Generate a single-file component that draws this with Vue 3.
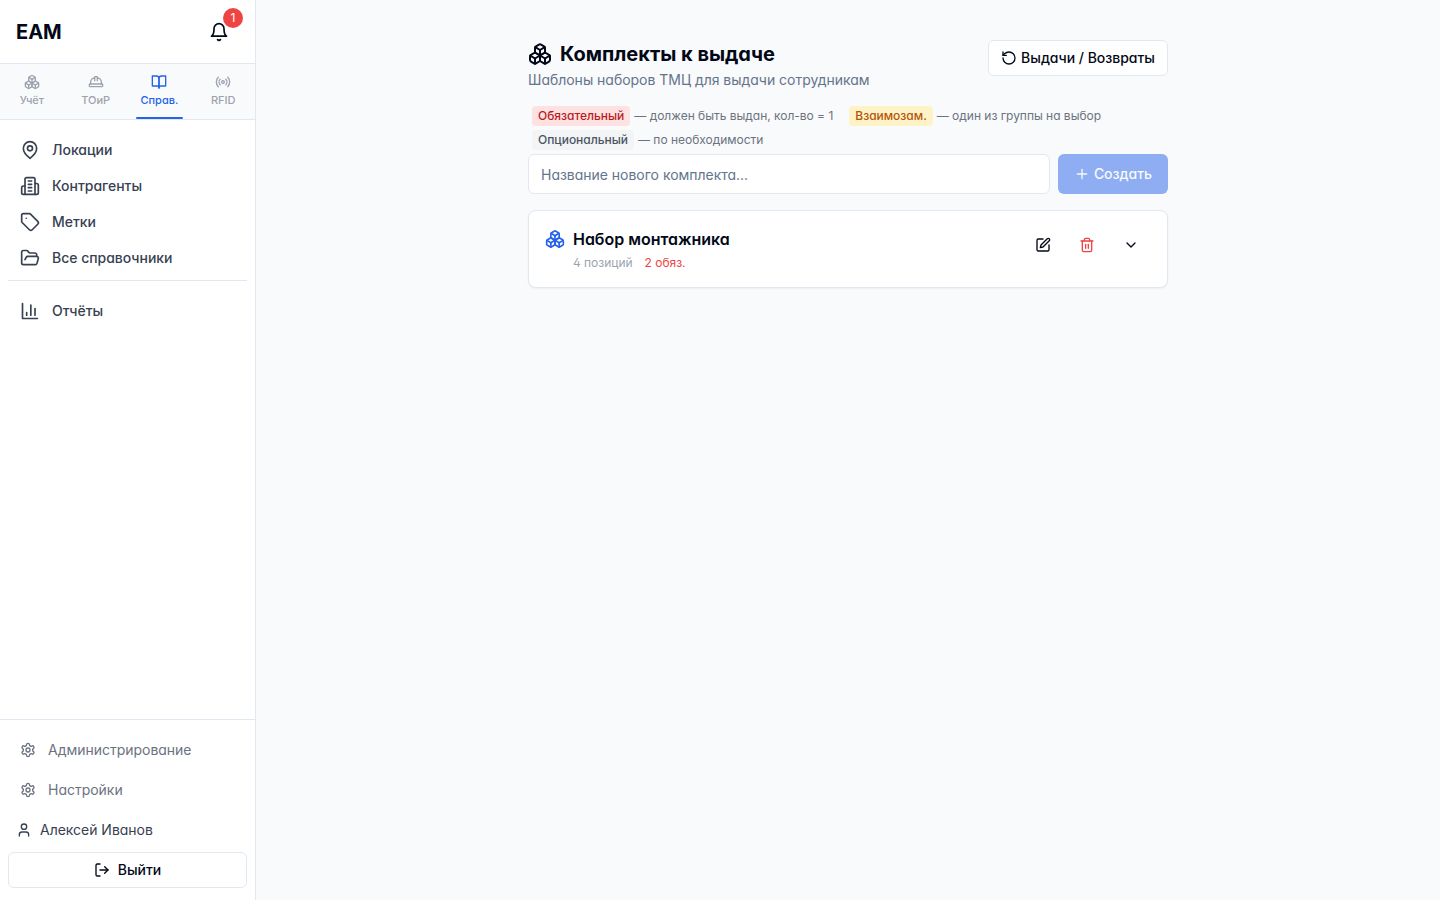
<template>
  <div class="layout">
    <aside class="sidebar">
      <div class="brand">
        <span class="logo">EAM</span>
        <button class="bell">
          <AppIcon name="bell" :size="20" />
          <span class="badge">1</span>
        </button>
      </div>

      <nav class="tabs">
        <button
          v-for="tab in tabs"
          :key="tab.label"
          class="tab"
          :class="{ active: activeTab === tab.label }"
          @click="activeTab = tab.label"
        >
          <AppIcon :name="tab.icon" :size="16" />
          <span>{{ tab.label }}</span>
        </button>
      </nav>

      <nav class="menu">
        <a v-for="item in menu" :key="item.label" class="menu-item">
          <AppIcon :name="item.icon" :size="20" />
          {{ item.label }}
        </a>
        <div class="divider"></div>
        <a class="menu-item">
          <AppIcon name="chart" :size="20" />
          Отчёты
        </a>
      </nav>

      <div class="bottom">
        <a class="bottom-item">
          <AppIcon name="settings" :size="16" />
          Администрирование
        </a>
        <a class="bottom-item">
          <AppIcon name="settings" :size="16" />
          Настройки
        </a>
        <div class="user">
          <AppIcon name="user" :size="16" />
          Алексей Иванов
        </div>
        <button class="btn logout">
          <AppIcon name="logout" :size="16" />
          Выйти
        </button>
      </div>
    </aside>

    <main class="main">
      <div class="content">
        <header class="head">
          <div>
            <h1><AppIcon name="boxes" :size="24" />Комплекты к выдаче</h1>
            <p class="subtitle">Шаблоны наборов ТМЦ для выдачи сотрудникам</p>
          </div>
          <button class="btn returns">
            <AppIcon name="rotate" :size="16" />
            Выдачи / Возвраты
          </button>
        </header>

        <div class="legend">
          <span v-for="kind in kinds" :key="kind.label" class="legend-item">
            <span class="tag" :class="kind.type">{{ kind.label }}</span>
            <span>— {{ kind.text }}</span>
          </span>
        </div>

        <form class="create" @submit.prevent="createKit">
          <input v-model="newName" type="text" placeholder="Название нового комплекта..." />
          <button type="submit" class="submit" :disabled="!newName.trim()">
            <AppIcon name="plus" :size="16" />
            Создать
          </button>
        </form>

        <div v-for="kit in kits" :key="kit.name" class="card">
          <AppIcon class="kit-icon" name="boxes" :size="20" />
          <div class="kit-info">
            <div class="kit-name">{{ kit.name }}</div>
            <div class="kit-meta">
              <span>{{ kit.total }} позиций</span>
              <span class="required">{{ kit.required }} обяз.</span>
            </div>
          </div>
          <div class="actions">
            <button><AppIcon name="edit" :size="16" /></button>
            <button class="danger"><AppIcon name="trash" :size="16" /></button>
            <button><AppIcon name="chevron" :size="16" /></button>
          </div>
        </div>
      </div>
    </main>
  </div>
</template>

<script setup>
import { h, ref } from 'vue'

const icons = {
  bell: ['M6 8a6 6 0 0 1 12 0c0 7 3 9 3 9H3s3-2 3-9', 'M10.3 21a1.94 1.94 0 0 0 3.4 0'],
  boxes: [
    'M2.97 12.92A2 2 0 0 0 2 14.63v3.24a2 2 0 0 0 .97 1.71l3 1.8a2 2 0 0 0 2.06 0L12 19v-5.5l-5-3-4.03 2.42Z',
    'm7 16.5-4.74-2.85', 'm7 16.5 5-3', 'M7 16.5v5.17',
    'M12 13.5V19l3.97 2.38a2 2 0 0 0 2.06 0l3-1.8a2 2 0 0 0 .97-1.71v-3.24a2 2 0 0 0-.97-1.71L17 10.5l-5 3Z',
    'm17 16.5-5-3', 'm17 16.5 4.74-2.85', 'M17 16.5v5.17',
    'M7.97 4.42A2 2 0 0 0 7 6.13v4.37l5 3 5-3V6.13a2 2 0 0 0-.97-1.71l-3-1.8a2 2 0 0 0-2.06 0l-3 1.8Z',
    'M12 8 7.26 5.15', 'm12 8 4.74-2.85', 'M12 13.5V8'
  ],
  hat: ['M10 10V5a1 1 0 0 1 1-1h2a1 1 0 0 1 1 1v5', 'M14 6a6 6 0 0 1 6 6v3', 'M4 15v-3a6 6 0 0 1 6-6', 'M3 15h18a1 1 0 0 1 1 1v2a1 1 0 0 1-1 1H3a1 1 0 0 1-1-1v-2a1 1 0 0 1 1-1z'],
  book: ['M2 3h6a4 4 0 0 1 4 4v14a3 3 0 0 0-3-3H2z', 'M22 3h-6a4 4 0 0 0-4 4v14a3 3 0 0 1 3-3h7z'],
  radio: ['M4.9 19.1C1 15.2 1 8.8 4.9 4.9', 'M7.8 16.2c-2.3-2.3-2.3-6.1 0-8.5', 'M14 12a2 2 0 1 1-4 0 2 2 0 0 1 4 0', 'M16.2 7.8c2.3 2.3 2.3 6.1 0 8.5', 'M19.1 4.9C23 8.8 23 15.1 19.1 19'],
  pin: ['M20 10c0 6-8 12-8 12s-8-6-8-12a8 8 0 0 1 16 0Z', 'M15 10a3 3 0 1 1-6 0 3 3 0 0 1 6 0'],
  building: ['M6 22V4a2 2 0 0 1 2-2h8a2 2 0 0 1 2 2v18Z', 'M6 12H4a2 2 0 0 0-2 2v6a2 2 0 0 0 2 2h2', 'M18 9h2a2 2 0 0 1 2 2v9a2 2 0 0 1-2 2h-2', 'M10 6h4', 'M10 10h4', 'M10 14h4', 'M10 18h4'],
  tag: ['M12.586 2.586A2 2 0 0 0 11.172 2H4a2 2 0 0 0-2 2v7.172a2 2 0 0 0 .586 1.414l8.704 8.704a2.426 2.426 0 0 0 3.42 0l6.58-6.58a2.426 2.426 0 0 0 0-3.42z', 'M7.5 7.5h.01'],
  folder: ['m6 14 1.5-2.9A2 2 0 0 1 9.24 10H20a2 2 0 0 1 1.94 2.5l-1.54 6a2 2 0 0 1-1.95 1.5H4a2 2 0 0 1-2-2V5a2 2 0 0 1 2-2h3.9a2 2 0 0 1 1.69.9l.81 1.2a2 2 0 0 0 1.67.9H18a2 2 0 0 1 2 2v2'],
  chart: ['M3 3v18h18', 'M18 17V9', 'M13 17V5', 'M8 17v-3'],
  settings: ['M12.22 2h-.44a2 2 0 0 0-2 2v.18a2 2 0 0 1-1 1.73l-.43.25a2 2 0 0 1-2 0l-.15-.08a2 2 0 0 0-2.73.73l-.22.38a2 2 0 0 0 .73 2.73l.15.1a2 2 0 0 1 1 1.72v.51a2 2 0 0 1-1 1.74l-.15.09a2 2 0 0 0-.73 2.73l.22.38a2 2 0 0 0 2.73.73l.15-.08a2 2 0 0 1 2 0l.43.25a2 2 0 0 1 1 1.73V20a2 2 0 0 0 2 2h.44a2 2 0 0 0 2-2v-.18a2 2 0 0 1 1-1.73l.43-.25a2 2 0 0 1 2 0l.15.08a2 2 0 0 0 2.73-.73l.22-.39a2 2 0 0 0-.73-2.73l-.15-.08a2 2 0 0 1-1-1.74v-.5a2 2 0 0 1 1-1.74l.15-.09a2 2 0 0 0 .73-2.73l-.22-.38a2 2 0 0 0-2.73-.73l-.15.08a2 2 0 0 1-2 0l-.43-.25a2 2 0 0 1-1-1.73V4a2 2 0 0 0-2-2z', 'M15 12a3 3 0 1 1-6 0 3 3 0 0 1 6 0'],
  user: ['M19 21v-2a4 4 0 0 0-4-4H9a4 4 0 0 0-4 4v2', 'M16 7a4 4 0 1 1-8 0 4 4 0 0 1 8 0'],
  logout: ['M9 21H5a2 2 0 0 1-2-2V5a2 2 0 0 1 2-2h4', 'm16 17 5-5-5-5', 'M21 12H9'],
  rotate: ['M3 12a9 9 0 1 0 9-9 9.75 9.75 0 0 0-6.74 2.74L3 8', 'M3 3v5h5'],
  plus: ['M5 12h14', 'M12 5v14'],
  edit: ['M12 3H5a2 2 0 0 0-2 2v14a2 2 0 0 0 2 2h14a2 2 0 0 0 2-2v-7', 'M18.375 2.625a2.121 2.121 0 1 1 3 3L12 15l-4 1 1-4Z'],
  trash: ['M3 6h18', 'M19 6v14a2 2 0 0 1-2 2H7a2 2 0 0 1-2-2V6', 'M8 6V4a2 2 0 0 1 2-2h4a2 2 0 0 1 2 2v2', 'M10 11v6', 'M14 11v6'],
  chevron: ['m6 9 6 6 6-6']
}

const AppIcon = ({ name, size }) =>
  h(
    'svg',
    {
      width: size,
      height: size,
      viewBox: '0 0 24 24',
      fill: 'none',
      stroke: 'currentColor',
      'stroke-width': 2,
      'stroke-linecap': 'round',
      'stroke-linejoin': 'round'
    },
    icons[name].map((d) => h('path', { d }))
  )
AppIcon.props = ['name', 'size']

const tabs = [
  { label: 'Учёт', icon: 'boxes' },
  { label: 'ТОиР', icon: 'hat' },
  { label: 'Справ.', icon: 'book' },
  { label: 'RFID', icon: 'radio' }
]
const activeTab = ref('Справ.')

const menu = [
  { label: 'Локации', icon: 'pin' },
  { label: 'Контрагенты', icon: 'building' },
  { label: 'Метки', icon: 'tag' },
  { label: 'Все справочники', icon: 'folder' }
]

const kinds = [
  { label: 'Обязательный', type: 'red', text: 'должен быть выдан, кол-во = 1' },
  { label: 'Взаимозам.', type: 'amber', text: 'один из группы на выбор' },
  { label: 'Опциональный', type: 'gray', text: 'по необходимости' }
]

const kits = ref([{ name: 'Набор монтажника', total: 4, required: 2 }])
const newName = ref('')

const createKit = () => {
  kits.value.push({ name: newName.value.trim(), total: 0, required: 0 })
  newName.value = ''
}
</script>

<style>
body {
  margin: 0;
}
</style>

<style scoped>
* {
  box-sizing: border-box;
}
.layout {
  display: flex;
  height: 100vh;
  background: #f9fafb;
  color: #020817;
  font-family: Inter, "Liberation Sans", sans-serif;
  font-size: 14px;
  line-height: 20px;
  letter-spacing: -0.02px;
  font-feature-settings: "cv02", "cv03", "cv04", "cv11";
}
svg {
  display: block;
  flex-shrink: 0;
}
button,
input {
  font: inherit;
  font-feature-settings: inherit;
  letter-spacing: inherit;
  color: inherit;
}
button {
  display: flex;
  align-items: center;
  justify-content: center;
  padding: 0;
  border: 0;
  background: none;
  cursor: pointer;
}
.sidebar {
  display: flex;
  flex-direction: column;
  width: 256px;
  border-right: 1px solid #e2e8f0;
  background: #fff;
}
.brand {
  display: flex;
  align-items: center;
  justify-content: space-between;
  height: 64px;
  padding: 0 16px;
  border-bottom: 1px solid #e2e8f0;
}
.logo {
  font-size: 20px;
  line-height: 28px;
  font-weight: 700;
}
.bell {
  position: relative;
  width: 40px;
  height: 40px;
}
.badge {
  position: absolute;
  top: -4px;
  right: -4px;
  width: 20px;
  height: 20px;
  border-radius: 50%;
  background: #ef4444;
  color: #fff;
  font-size: 12px;
  line-height: 20px;
}
.tabs {
  display: flex;
  height: 56px;
  border-bottom: 1px solid #e2e8f0;
  background: #f9fafb;
}
.tab {
  position: relative;
  flex: 1;
  flex-direction: column;
  gap: 2px;
  padding-bottom: 2px;
  color: #9ca3af;
  font-size: 11px;
  line-height: 16px;
  font-weight: 500;
}
.tab.active {
  color: #2563eb;
}
.tab.active::after {
  content: "";
  position: absolute;
  bottom: 0;
  left: 8px;
  right: 8px;
  height: 2px;
  border-radius: 2px;
  background: #2563eb;
}
.menu {
  flex: 1;
  padding: 12px 8px;
}
.menu-item {
  display: flex;
  align-items: center;
  gap: 12px;
  height: 36px;
  padding: 0 12px;
  color: #374151;
  font-weight: 500;
}
.divider {
  height: 1px;
  margin: 4px 0 12px;
  background: #e2e8f0;
}
.bottom {
  padding: 12px 8px;
  border-top: 1px solid #e2e8f0;
}
.bottom-item {
  display: flex;
  align-items: center;
  gap: 12px;
  height: 36px;
  margin-bottom: 4px;
  padding: 0 12px;
  color: #6b7280;
}
.user {
  display: flex;
  align-items: center;
  gap: 8px;
  height: 36px;
  padding: 0 8px;
  margin-bottom: 4px;
  color: #374151;
}
.btn {
  height: 36px;
  border: 1px solid #e2e8f0;
  border-radius: 6px;
  background: #fff;
  font-weight: 500;
}
.logout {
  width: 100%;
  gap: 8px;
}
.main {
  flex: 1;
  padding: 40px 0;
}
.content {
  width: 640px;
  margin: 0 auto;
}
.head {
  display: flex;
  align-items: flex-start;
  justify-content: space-between;
}
h1 {
  display: flex;
  align-items: center;
  gap: 8px;
  margin: 0;
  font-size: 20px;
  line-height: 28px;
  font-weight: 700;
}
.subtitle {
  margin: 2px 0 0;
  color: #64748b;
}
.returns {
  gap: 4px;
  padding: 0 12px;
}
.legend {
  display: flex;
  flex-wrap: wrap;
  gap: 4px 16px;
  margin: 16px 0 4px;
  padding: 0 4px;
  color: #6b7280;
  font-size: 12px;
}
.legend-item {
  display: flex;
  gap: 4px;
}
.tag {
  padding: 0 6px;
  border-radius: 4px;
  font-weight: 500;
}
.red {
  background: #fee2e2;
  color: #b91c1c;
}
.amber {
  background: #fef3c7;
  color: #b45309;
}
.gray {
  background: #f3f4f6;
  color: #4b5563;
}
.create {
  display: flex;
  gap: 8px;
  margin-bottom: 16px;
}
.create input {
  flex: 1;
  height: 40px;
  padding: 0 12px;
  border: 1px solid #e2e8f0;
  border-radius: 6px;
  background: #fff;
}
.create input::placeholder {
  color: #64748b;
}
.submit {
  gap: 4px;
  height: 40px;
  padding: 0 16px;
  border-radius: 6px;
  background: #2563eb;
  color: #f8fafc;
  font-weight: 500;
}
.submit:disabled {
  opacity: 0.5;
}
.card {
  display: flex;
  gap: 8px;
  height: 78px;
  padding: 16px;
  border: 1px solid #e2e8f0;
  border-radius: 8px;
  background: #fff;
  box-shadow: 0 1px 2px rgba(0, 0, 0, 0.05);
}
.kit-icon {
  margin-top: 2px;
  color: #2563eb;
}
.kit-info {
  flex: 1;
}
.kit-name {
  font-size: 16px;
  line-height: 24px;
  font-weight: 600;
}
.kit-meta {
  display: flex;
  gap: 12px;
  margin-top: 4px;
  color: #9ca3af;
  font-size: 12px;
  line-height: 16px;
}
.required {
  color: #ef4444;
}
.actions {
  display: flex;
  gap: 4px;
}
.actions button {
  width: 40px;
  height: 36px;
}
.actions .danger {
  color: #ef4444;
}
</style>
